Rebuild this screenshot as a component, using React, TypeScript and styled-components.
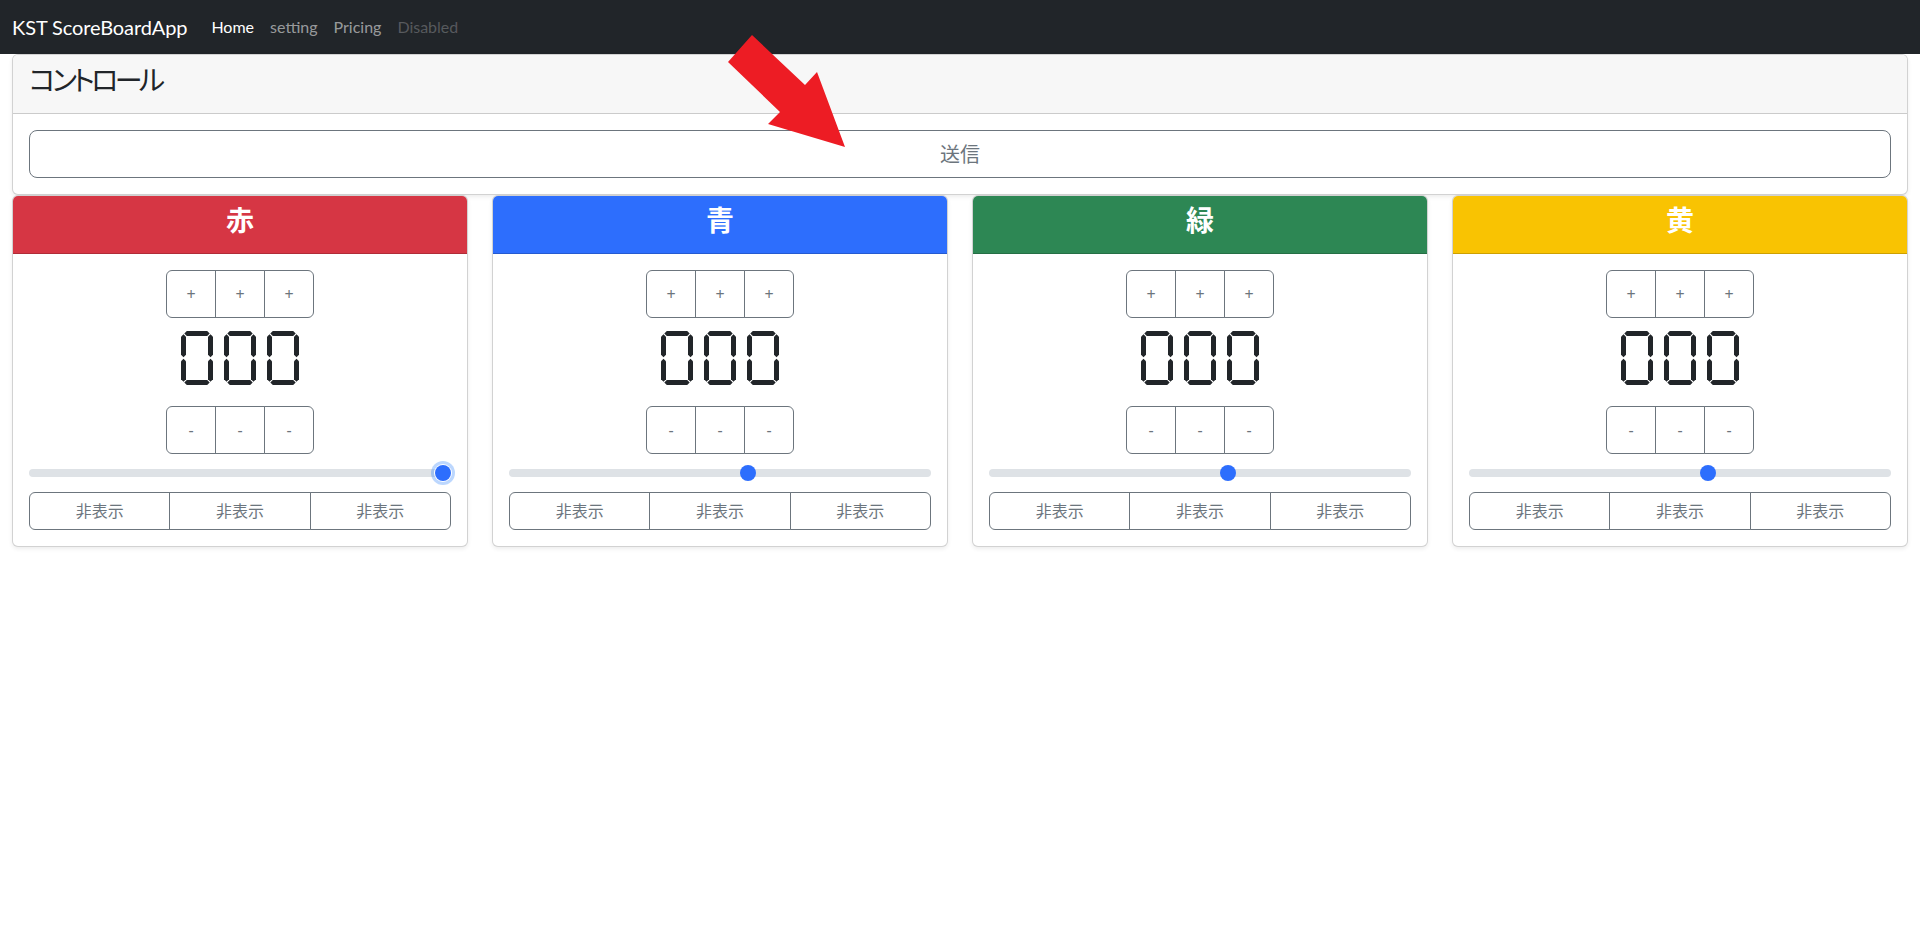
import React from "react";
import styled, { createGlobalStyle } from "styled-components";

const GlobalStyle = createGlobalStyle`
  *, *::before, *::after { box-sizing: border-box; }
  html, body { margin: 0; padding: 0; background: #fff; }
  body {
    font-family: Lato, "Noto Sans CJK JP", "Noto Sans", sans-serif;
    color: #212529;
    font-size: 16px;
    line-height: 1.5;
  }
`;

const Page = styled.div`
  position: relative;
  min-height: 934px;
`;

/* ---------- Navbar ---------- */
const NavBar = styled.nav`
  height: 54px;
  background: #212529;
  display: flex;
  align-items: center;
  padding: 0 12px;
`;

const Brand = styled.a`
  font-size: 20px;
  line-height: 30px;
  color: #fff;
  text-decoration: none;
  margin-right: 16px;
  letter-spacing: -0.1px;
`;

const NavList = styled.ul`
  display: flex;
  list-style: none;
  margin: 0;
  padding: 0;
`;

const NavLink = styled.a<{ $state: "active" | "normal" | "disabled" }>`
  display: block;
  padding: 8px;
  font-size: 16px;
  line-height: 24px;
  text-decoration: none;
  color: ${(p) =>
    p.$state === "active"
      ? "#fff"
      : p.$state === "disabled"
      ? "rgba(255,255,255,0.25)"
      : "rgba(255,255,255,0.55)"};
`;

/* ---------- Layout ---------- */
const Main = styled.main`
  padding: 0 12px;
`;

const Card = styled.section`
  background: #fff;
  border: 1px solid rgba(0, 0, 0, 0.175);
  border-radius: 6px;
  box-shadow: 0 2px 4px rgba(0, 0, 0, 0.075);
  overflow: hidden;
  display: flex;
  flex-direction: column;
`;

const CardHeader = styled.header<{ $bg?: string; $h: number }>`
  height: ${(p) => p.$h}px;
  padding: 8px 16px 0;
  background: ${(p) => p.$bg ?? "#f7f7f7"};
  border-bottom: 1px solid rgba(0, 0, 0, 0.175);
  text-align: ${(p) => (p.$bg ? "center" : "left")};
`;

const ControlTitle = styled.h3`
  margin: 0;
  font-size: 28px;
  line-height: 34px;
  font-weight: 400;
  font-feature-settings: "palt";
  letter-spacing: -3.6px;
  color: #212529;
`;

const TeamTitle = styled.h3`
  margin: 0;
  font-size: 28px;
  line-height: 33.6px;
  font-weight: 700;
  color: #fff;
`;

const ControlBody = styled.div`
  padding: 16px;
`;

const SendButton = styled.button`
  display: block;
  width: 100%;
  height: 48px;
  background: #fff;
  border: 1px solid #6c757d;
  border-radius: 8px;
  color: #6c757d;
  font-family: inherit;
  font-size: 20px;
  line-height: 30px;
  cursor: pointer;
`;

const Grid = styled.div`
  display: grid;
  grid-template-columns: repeat(4, 1fr);
  column-gap: 24px;
`;

const TeamBody = styled.div`
  padding: 16px;
  display: flex;
  flex-direction: column;
  align-items: center;
`;

const BtnGroup = styled.div<{ $full?: boolean }>`
  display: flex;
  width: ${(p) => (p.$full ? "100%" : "auto")};
`;

const GroupButton = styled.button<{ $w?: number; $h: number; $fs: number }>`
  flex: ${(p) => (p.$w ? `0 0 ${p.$w}px` : "1 1 0")};
  height: ${(p) => p.$h}px;
  margin: 0;
  padding: 0;
  background: #fff;
  border: 1px solid #6c757d;
  color: #6c757d;
  font-family: "Noto Sans", "Noto Sans CJK JP", sans-serif;
  font-size: ${(p) => p.$fs}px;
  line-height: 1.5;
  cursor: pointer;
  border-radius: 0;
  & + & {
    margin-left: -1px;
  }
  &:first-child {
    border-top-left-radius: 6px;
    border-bottom-left-radius: 6px;
  }
  &:last-child {
    border-top-right-radius: 6px;
    border-bottom-right-radius: 6px;
  }
`;

/* ---------- Seven segment display ---------- */
const Display = styled.div`
  height: 88px;
  padding-top: 13px;
  display: flex;
  gap: 11px;
`;

const DigitBox = styled.span`
  display: grid;
  grid-template-columns: 5px 22px 5px;
  grid-template-rows: 5px 19.5px 5px 19.5px 5px;
  width: 32px;
  height: 54px;
`;

const H_CLIP =
  "polygon(3.3px 50%, 5.8px 0, calc(100% - 5.8px) 0, calc(100% - 3.3px) 50%, calc(100% - 5.8px) 100%, 5.8px 100%)";
const V_CLIP =
  "polygon(50% 3.3px, 100% 5.8px, 100% calc(100% - 5.8px), 50% calc(100% - 3.3px), 0 calc(100% - 5.8px), 0 5.8px)";

const SEG_PLACE: Record<string, { row: string; col: string; v: boolean }> = {
  a: { row: "1 / 2", col: "1 / 4", v: false },
  b: { row: "1 / 4", col: "3 / 4", v: true },
  c: { row: "3 / 6", col: "3 / 4", v: true },
  d: { row: "5 / 6", col: "1 / 4", v: false },
  e: { row: "3 / 6", col: "1 / 2", v: true },
  f: { row: "1 / 4", col: "1 / 2", v: true },
  g: { row: "3 / 4", col: "1 / 4", v: false },
};

const DIGIT_SEGS: Record<string, string> = {
  "0": "abcdef",
  "1": "bc",
  "2": "abdeg",
  "3": "abcdg",
  "4": "bcfg",
  "5": "acdfg",
  "6": "acdefg",
  "7": "abc",
  "8": "abcdefg",
  "9": "abcdfg",
};

const Segment = styled.span<{ $row: string; $col: string; $v: boolean; $on: boolean }>`
  grid-row: ${(p) => p.$row};
  grid-column: ${(p) => p.$col};
  background: #212529;
  opacity: ${(p) => (p.$on ? 1 : 0)};
  clip-path: ${(p) => (p.$v ? V_CLIP : H_CLIP)};
`;

function SevenSegDigit({ d }: { d: string }) {
  const on = DIGIT_SEGS[d] ?? "";
  return (
    <DigitBox aria-hidden="true">
      {Object.entries(SEG_PLACE).map(([k, s]) => (
        <Segment key={k} $row={s.row} $col={s.col} $v={s.v} $on={on.includes(k)} />
      ))}
    </DigitBox>
  );
}

function ScoreDisplay({ value }: { value: string }) {
  return (
    <Display role="img" aria-label={value} title={value}>
      {value.split("").map((c, i) => (
        <SevenSegDigit key={i} d={c} />
      ))}
    </Display>
  );
}

/* ---------- Slider ---------- */
const SliderRow = styled.div`
  width: 100%;
  height: 38px;
  display: flex;
  align-items: center;
`;

const Range = styled.input<{ $focused?: boolean }>`
  -webkit-appearance: none;
  appearance: none;
  width: 100%;
  height: 24px;
  margin: 0;
  padding: 0;
  background: transparent;
  outline: none;
  &::-webkit-slider-runnable-track {
    height: 8px;
    background: #dee2e6;
    border-radius: 16px;
    border: 0;
  }
  &::-webkit-slider-thumb {
    -webkit-appearance: none;
    appearance: none;
    width: 16px;
    height: 16px;
    margin-top: -4px;
    border: 0;
    border-radius: 50%;
    background: #2d6efd;
    box-shadow: ${(p) =>
      p.$focused ? "0 0 0 1px #fff, 0 0 0 4px rgba(13,110,253,0.28)" : "none"};
  }
  &::-moz-range-track {
    height: 8px;
    background: #dee2e6;
    border-radius: 16px;
  }
  &::-moz-range-thumb {
    width: 16px;
    height: 16px;
    border: 0;
    border-radius: 50%;
    background: #2d6efd;
  }
`;

/* ---------- Arrow annotation ---------- */
const ArrowOverlay = styled.svg`
  position: absolute;
  left: 720px;
  top: 30px;
  pointer-events: none;
`;

type Team = { name: string; color: string; value: number; focused?: boolean };

const TEAMS: Team[] = [
  { name: "赤", color: "#d63644", value: 100, focused: true },
  { name: "青", color: "#2d6efd", value: 57 },
  { name: "緑", color: "#2d8754", value: 57 },
  { name: "黄", color: "#f9c302", value: 57 },
];

function TeamCard({ team }: { team: Team }) {
  return (
    <Card>
      <CardHeader $bg={team.color} $h={58}>
        <TeamTitle>{team.name}</TeamTitle>
      </CardHeader>
      <TeamBody>
        <BtnGroup>
          {[0, 1, 2].map((i) => (
            <GroupButton key={i} $w={50} $h={48} $fs={16}>
              +
            </GroupButton>
          ))}
        </BtnGroup>
        <ScoreDisplay value="000" />
        <BtnGroup>
          {[0, 1, 2].map((i) => (
            <GroupButton key={i} $w={50} $h={48} $fs={16}>
              -
            </GroupButton>
          ))}
        </BtnGroup>
        <SliderRow>
          <Range
            type="range"
            min={0}
            max={100}
            defaultValue={team.value}
            $focused={team.focused}
          />
        </SliderRow>
        <BtnGroup $full>
          {[0, 1, 2].map((i) => (
            <GroupButton key={i} $h={38} $fs={16}>
              非表示
            </GroupButton>
          ))}
        </BtnGroup>
      </TeamBody>
    </Card>
  );
}

export default function App() {
  return (
    <Page>
      <GlobalStyle />
      <NavBar>
        <Brand href="#">KST ScoreBoardApp</Brand>
        <NavList>
          <li>
            <NavLink href="#" $state="active">Home</NavLink>
          </li>
          <li>
            <NavLink href="#" $state="normal">setting</NavLink>
          </li>
          <li>
            <NavLink href="#" $state="normal">Pricing</NavLink>
          </li>
          <li>
            <NavLink $state="disabled">Disabled</NavLink>
          </li>
        </NavList>
      </NavBar>
      <Main>
        <Card>
          <CardHeader $h={59}>
            <ControlTitle>コントロール</ControlTitle>
          </CardHeader>
          <ControlBody>
            <SendButton>送信</SendButton>
          </ControlBody>
        </Card>
        <Grid>
          {TEAMS.map((t) => (
            <TeamCard key={t.name} team={t} />
          ))}
        </Grid>
      </Main>
      <ArrowOverlay width="140" height="125" viewBox="0 0 140 125">
        <polygon
          points="32,5 8,32 60,82 48,94 125,117 97,42 85,55"
          fill="#ed1c24"
        />
      </ArrowOverlay>
    </Page>
  );
}
